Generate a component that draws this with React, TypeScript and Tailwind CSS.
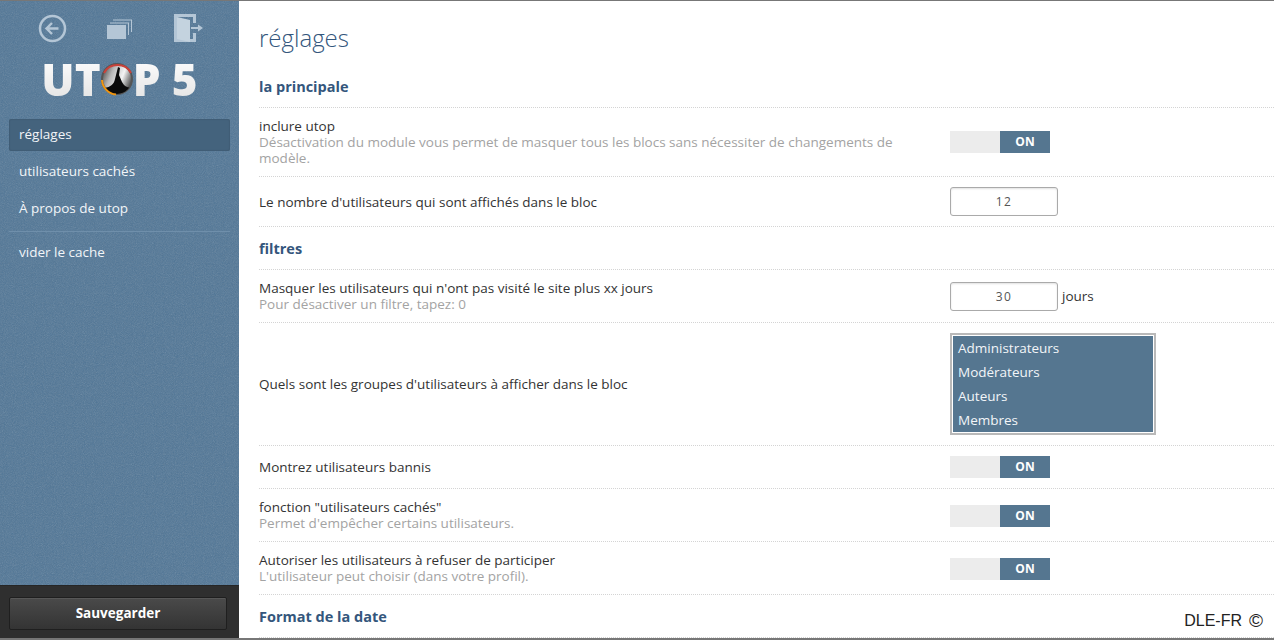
import type { ReactNode } from "react";

const sideLink = "block h-[32px] rounded-[2px] px-[10px] text-[13.5px] leading-[31px] text-[#f2f5f8]";

function Toggle({ low }: { low?: boolean }) {
  return (
    <div className={low ? "mt-[2px] flex h-[22px] w-[100px]" : "flex h-[22px] w-[100px]"}>
      <div className="w-[50px] bg-[#ececec]" />
      <div className="w-[50px] bg-[#557690] text-center text-[12px] font-bold leading-[22px] text-white">ON</div>
    </div>
  );
}

function NumberBox({ value }: { value: string }) {
  return (
    <div className="h-[29px] w-[108px] rounded-[3px] border border-[#aaaaaa] bg-white text-center text-[12px] leading-[27px] tracking-[1.5px] text-[#555555] shadow-[inset_0_1px_2px_rgba(0,0,0,0.12)]">
      {value}
    </div>
  );
}

function Row({ label, hint, children }: { label: string; hint?: string; children: ReactNode }) {
  return (
    <div className="flex items-center border-b border-dotted border-[#d4d4d4] py-[10px]">
      <div className="w-[691px] pr-[50px] text-[13.5px] leading-[16px] text-[#333333]">
        <div>{label}</div>
        {hint && <div className="text-[#a3a3a3]">{hint}</div>}
      </div>
      <div className="flex items-center">{children}</div>
    </div>
  );
}

function Heading({ children }: { children: ReactNode }) {
  return (
    <div className="border-b border-dotted border-[#d4d4d4] pb-[9px] pt-[11px] text-[14.5px] font-bold leading-[22px] text-[#34567c]">
      {children}
    </div>
  );
}

function Logo() {
  return (
    <div className="mt-[9px] flex h-[50px] items-center justify-center text-[44px] font-extrabold leading-[50px]">
      <span className="bg-gradient-to-b from-white to-[#e2e2e2] bg-clip-text text-transparent">UT</span>
      <svg width="34" height="34" viewBox="0 0 34 34" className="mx-[-1px]">
        <defs>
          <linearGradient id="lens" x1="0" y1="0.1" x2="1" y2="0.5">
            <stop offset="0" stopColor="#3a3a3a" />
            <stop offset="0.35" stopColor="#b8b8b8" />
            <stop offset="0.7" stopColor="#f4f4f4" />
            <stop offset="1" stopColor="#5a5a5a" />
          </linearGradient>
          <clipPath id="lensClip">
            <circle cx="17" cy="17" r="15" />
          </clipPath>
        </defs>
        <circle cx="17" cy="17" r="15" fill="url(#lens)" stroke="#555" strokeWidth="2" />
        <path
          clipPath="url(#lensClip)"
          d="M18 5 L20 6 L19 13 L22 20 C24 24 27 25 30 26 L30 34 L4 34 L4 26 C11 25 14 22 15 17 Z"
          fill="#0a0a0a"
        />
        <path d="M4 11 A15.5 15.5 0 0 1 31 11" fill="none" stroke="#c9423a" strokeWidth="2" />
        <path d="M2 18 A15.5 15.5 0 0 0 16 32.5" fill="none" stroke="#f0950f" strokeWidth="2" />
      </svg>
      <span className="bg-gradient-to-b from-white to-[#e2e2e2] bg-clip-text text-transparent">P&nbsp;5</span>
    </div>
  );
}

function Sidebar() {
  return (
    <div className="relative flex h-full w-[239px] shrink-0 flex-col bg-[#4f7596]">
      <svg className="pointer-events-none absolute inset-0 h-full w-full opacity-[0.25]">
        <filter id="grain">
          <feTurbulence type="fractalNoise" baseFrequency="1.1" numOctaves="2" />
          <feColorMatrix type="saturate" values="0" />
        </filter>
        <rect width="100%" height="100%" filter="url(#grain)" />
      </svg>
      <div className="relative flex flex-1 flex-col">
        <div className="flex h-[44px] items-end">
          <svg width="239" height="44" viewBox="0 0 239 44" fill="none">
            <g stroke="#b4c6d6" strokeWidth="2.5">
              <circle cx="52.5" cy="27.5" r="12.5" />
              <path d="M58.5 27.5H47M52 22l-5.5 5.5L52 33" strokeWidth="2.4" />
            </g>
            <g fill="#b4c6d6">
              <rect x="107" y="24" width="19" height="14" />
              <path d="M110 21.5H129V34H128V22.5H110Z" />
              <path d="M113 18.5H132V31H131V19.5H113Z" />
              <path
                fillRule="evenodd"
                d="M174 13H196V22H193V16H177V38H193V32H196V41H174Z"
              />
              <path d="M177 16L190 19V41L177 38Z" fill="#c4d3df" />
              <path d="M191 26H198V23.5L203 27L198 30.5V28H191Z" />
            </g>
          </svg>
        </div>
        <Logo />
        <nav className="mt-[15px] px-[9px]">
          <div className={`${sideLink} bg-[#44637d] shadow-[inset_0_0_2px_rgba(0,0,0,0.2)]`}>réglages</div>
          <div className={`${sideLink} mt-[5px]`}>utilisateurs cachés</div>
          <div className={`${sideLink} mt-[5px]`}>À propos de utop</div>
          <div className="mt-[6px] border-t border-[#6f8fab]" />
          <div className={`${sideLink} mt-[5px]`}>vider le cache</div>
        </nav>
      </div>
      <div className="relative h-[53px] border-t border-[#262626] bg-[#2f2f2f] px-[9px] pt-[11px]">
        <div className="h-[33px] w-[218px] rounded-[2px] border border-[#1f1f1f] bg-gradient-to-b from-[#4a4a4a] to-[#343434] text-center text-[13.5px] font-bold leading-[31px] text-white shadow-[inset_0_1px_0_rgba(255,255,255,0.08)]">
          Sauvegarder
        </div>
      </div>
    </div>
  );
}

export default function App() {
  return (
    <div className="relative h-[640px] w-[1274px] overflow-hidden border-b-2 border-t border-[#777777] bg-white font-['Open_Sans',sans-serif]">
      <div className="flex h-full">
        <Sidebar />
        <div className="min-w-0 flex-1 pl-[20px]">
          <h1 className="h-[64px] pt-[18px] text-[24px] font-light leading-[38px] text-[#34567c]">réglages</h1>
          <Heading>la principale</Heading>
          <Row
            label="inclure utop"
            hint="Désactivation du module vous permet de masquer tous les blocs sans nécessiter de changements de modèle."
          >
            <Toggle />
          </Row>
          <Row label="Le nombre d'utilisateurs qui sont affichés dans le bloc">
            <NumberBox value="12" />
          </Row>
          <Heading>filtres</Heading>
          <Row label="Masquer les utilisateurs qui n'ont pas visité le site plus xx jours" hint="Pour désactiver un filtre, tapez: 0">
            <NumberBox value="30" />
            <span className="ml-[4px] text-[13.5px] text-[#333333]">jours</span>
          </Row>
          <Row label="Quels sont les groupes d'utilisateurs à afficher dans le bloc">
            <div className="h-[102px] w-[206px] border-2 border-[#b9b9b9] bg-[#557690] px-[6px] py-[1px] text-[13.5px] leading-[24px] text-[#f2f5f8] outline outline-1 -outline-offset-3 outline-white">
              <div>Administrateurs</div>
              <div>Modérateurs</div>
              <div>Auteurs</div>
              <div>Membres</div>
            </div>
          </Row>
          <Row label="Montrez utilisateurs bannis">
            <Toggle />
          </Row>
          <Row label='fonction "utilisateurs cachés"' hint="Permet d'empêcher certains utilisateurs.">
            <Toggle low />
          </Row>
          <Row label="Autoriser les utilisateurs à refuser de participer" hint="L'utilisateur peut choisir (dans votre profil).">
            <Toggle low />
          </Row>
          <Heading>Format de la date</Heading>
        </div>
      </div>
      <div className="absolute bottom-[6px] right-[11px] flex items-center bg-white font-['Liberation_Sans',sans-serif] text-[16px] leading-[22px] text-[#222222]">
        DLE-FR<span className="ml-[7px] text-[19px]">©</span>
      </div>
    </div>
  );
}
